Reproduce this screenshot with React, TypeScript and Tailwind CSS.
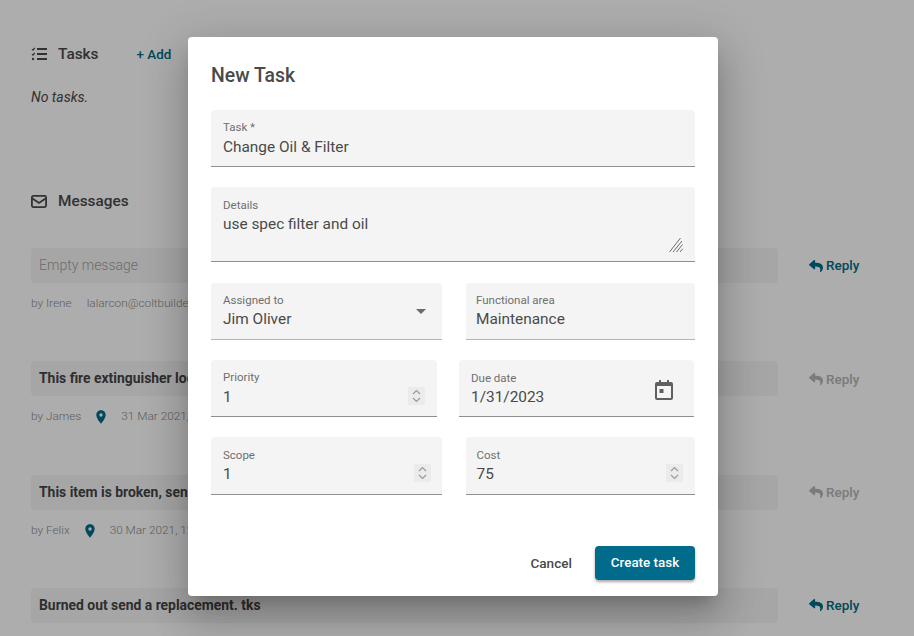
import { FaReply } from "react-icons/fa";
import { MdLocationOn } from "react-icons/md";

const font = { fontFamily: "Roboto, sans-serif" };

function TasksIcon() {
  return (
    <svg width="16" height="14" viewBox="0 0 16 14" fill="none" stroke="currentColor" className="shrink-0">
      <path d="M1 2.2 2 3.2 3.8.8M1 7.2 2 8.2 3.8 5.8" strokeWidth="1.2" />
      <circle cx="2" cy="12" r="1.2" fill="currentColor" stroke="none" />
      <path d="M6 2h10M6 7h10M6 12h10" strokeWidth="1.8" />
    </svg>
  );
}

function MailIcon() {
  return (
    <svg width="16" height="13" viewBox="0 0 16 13" fill="none" stroke="currentColor" strokeWidth="1.8" className="shrink-0">
      <rect x="0.9" y="0.9" width="14.2" height="11.2" rx="1.5" />
      <path d="M1 3.2 8 8l7-4.8" />
    </svg>
  );
}

function Spinner() {
  return (
    <div className="flex h-[18px] w-[17px] items-center justify-center bg-[#ebebeb]">
      <svg width="9" height="14" viewBox="0 0 9 14" fill="none" stroke="#9a9a9a" strokeWidth="1.2">
        <path d="M1 5 4.5 1.5 8 5M1 9l3.500 3.500L8 9" />
      </svg>
    </div>
  );
}

function CalendarIcon() {
  return (
    <svg width="18" height="20" viewBox="0 0 18 20" className="shrink-0">
      <path d="M4 0h2v2h6V0h2v2h2a2 2 0 0 1 2 2v14a2 2 0 0 1-2 2H2a2 2 0 0 1-2-2V4a2 2 0 0 1 2-2h2z" fill="#5f5f5f" />
      <rect x="2" y="6" width="14" height="12" fill="#f4f4f4" />
      <rect x="4.500" y="9" width="4" height="4" fill="#5f5f5f" />
    </svg>
  );
}

function ResizeHandle() {
  return (
    <svg width="14" height="14" viewBox="0 0 14 14" stroke="#6b6b6b" strokeWidth="1" className="absolute bottom-[9px] right-[12px]">
      <path d="M0.500 14 11.500 0M4 14l9-11M7.500 14l6-7.500M11 14l3-3.500" />
    </svg>
  );
}

type FieldProps = {
  label: string;
  value: string;
  className?: string;
  lineClass?: string;
  // label/value offsets, these differ a px or two from field to field
  labelClass?: string;
  valueClass?: string;
  children?: React.ReactNode;
};

function Field({
  label,
  value,
  className = "",
  lineClass = "border-[#8f8f8f]",
  labelClass = "pt-[10px]",
  valueClass = "mt-[3px]",
  children,
}: FieldProps) {
  return (
    <div className={`relative rounded-t border-b bg-[#f4f4f4] pr-3 ${lineClass} ${className}`}>
      <div className={`text-[11.5px] leading-[14px] text-[#6f6f6f] ${labelClass}`}>{label}</div>
      <div className={`text-[15.4px] leading-[20px] text-[#4a4a4a] ${valueClass}`}>{value}</div>
      {children}
    </div>
  );
}

type Message = {
  text: string;
  by: string;
  date?: string;
  email?: string;
  bold?: boolean;
  active: boolean;
};

const messages: Message[] = [
  { text: "Empty message", by: "by Irene", email: "lalarcon@coltbuilders.com", active: true },
  { text: "This fire extinguisher looks expired", by: "by James", date: "31 Mar 2021, 10:12", bold: true, active: false },
  { text: "This item is broken, send a new one", by: "by Felix", date: "30 Mar 2021, 12:40", bold: true, active: false },
  { text: "Burned out send a replacement. tks", by: "", bold: true, active: true },
];

function MessageRow({ m }: { m: Message }) {
  return (
    <div className="h-[113.33px]">
      <div className="flex items-center">
        <div
          className={`flex h-[35px] flex-1 items-center rounded bg-[#f5f5f5] px-2 ${
            m.bold ? "text-[13.9px] font-bold text-[#454545]" : "text-[14px] font-light text-[#a0a0a0]"
          }`}
        >
          {m.text}
        </div>
        <div
          className={`ml-[31px] flex w-[51px] items-center gap-[3px] text-[13.5px] font-medium ${
            m.active ? "text-[#006b86]" : "text-[#b5b5b5]"
          }`}
        >
          <FaReply size={14} className="shrink-0" />
          Reply
        </div>
      </div>
      {m.by && (
        <div className="mt-[13px] flex h-[16px] items-center text-[11.8px] font-light text-[#8c8c8c]">
          <span>{m.by}</span>
          {m.email && <span className="ml-[15px]">{m.email}</span>}
          {m.date && (
            <>
              <MdLocationOn size={16} className="ml-[12px] text-[#006b86]" />
              <span className="ml-[12px]">{m.date}</span>
            </>
          )}
        </div>
      )}
    </div>
  );
}

export default function App() {
  return (
    <div className="relative h-[636px] w-[914px] overflow-hidden bg-white" style={font}>
      <main className="pl-[31px] pr-[54px] pt-[44px]">
        <div className="flex h-[20px] items-center text-[#4a4a4a]">
          <TasksIcon />
          <h2 className="ml-[11px] mt-[2px] text-[15.4px] font-medium">Tasks</h2>
          <span className="ml-[38px] mt-[2px] text-[13.4px] font-medium text-[#006b86]">+ Add</span>
        </div>
        <p className="mt-[24px] text-[14px] italic leading-[18px] text-[#4a4a4a]">No tasks.</p>
        <div className="mt-[85px] flex h-[20px] items-center text-[#4a4a4a]">
          <MailIcon />
          <h2 className="ml-[11px] mt-[2px] text-[15.4px] font-medium">Messages</h2>
        </div>
        <div className="mt-[37px]">
          {messages.map((m) => (
            <MessageRow key={m.text} m={m} />
          ))}
        </div>
      </main>

      <div className="absolute inset-0 bg-black/32">
        <div className="absolute left-[188px] top-[37px] h-[559px] w-[530px] rounded bg-white px-[23px] shadow-[0_11px_15px_-7px_rgba(0,0,0,0.2),0_24px_38px_3px_rgba(0,0,0,0.14),0_9px_46px_8px_rgba(0,0,0,0.12)]">
          <h1 className="pt-[27px] text-[19.4px] font-medium leading-[24px] text-[#4a4a4a]">New Task</h1>

          <div className="mt-[22px] flex flex-col">
            <Field label="Task *" value="Change Oil & Filter" className="h-[57px] pl-3" />
            <Field label="Details" value="use spec filter and oil" className="mt-[20px] h-[75px] pl-3" labelClass="pt-[11px]" valueClass="mt-[2px]">
              <ResizeHandle />
            </Field>

            <div className="mt-[21px] flex gap-[24px]">
              <Field label="Assigned to" value="Jim Oliver" className="h-[57px] flex-1 pl-3" lineClass="border-[#b5b5b5]" valueClass="mt-[2px]">
                <div className="absolute right-[16px] top-[26px] h-0 w-0 border-x-[5px] border-t-[5px] border-x-transparent border-t-[#6b6b6b]" />
              </Field>
              <Field label="Functional area" value="Maintenance" className="h-[57px] flex-1 pl-[10px]" lineClass="border-[#b5b5b5]" valueClass="mt-[2px]" />
            </div>

            <div className="mt-[20px] flex justify-between">
              <Field label="Priority" value="1" className="h-[57px] w-[226px] pl-3">
                <div className="absolute right-[12px] top-[27px]">
                  <Spinner />
                </div>
              </Field>
              <Field label="Due date" value="1/31/2023" className="mr-[1px] h-[57px] w-[235px] pl-3" labelClass="pt-[11px]" valueClass="mt-[2px]">
                <div className="absolute right-[21px] top-[20px]">
                  <CalendarIcon />
                </div>
              </Field>
            </div>

            <div className="mt-[20px] flex gap-[24px]">
              <Field label="Scope" value="1" className="h-[58px] flex-1 pl-3" labelClass="pt-[11px]" valueClass="mt-[2px]">
                <div className="absolute right-[11px] top-[27px]">
                  <Spinner />
                </div>
              </Field>
              <Field label="Cost" value="75" className="h-[58px] flex-1 pl-[11px]" labelClass="pt-[11px]" valueClass="mt-[2px]">
                <div className="absolute right-[12px] top-[27px]">
                  <Spinner />
                </div>
              </Field>
            </div>
          </div>

          <div className="mt-[51px] flex items-center justify-end">
            <button className="mr-[23px] text-[13.6px] font-medium text-[#4a4a4a]">Cancel</button>
            <button className="h-[34px] w-[100px] rounded bg-[#006b8a] text-[13.4px] font-medium text-white shadow-[0_2px_3px_rgba(0,0,0,0.35)]">
              Create task
            </button>
          </div>
        </div>
      </div>
    </div>
  );
}
